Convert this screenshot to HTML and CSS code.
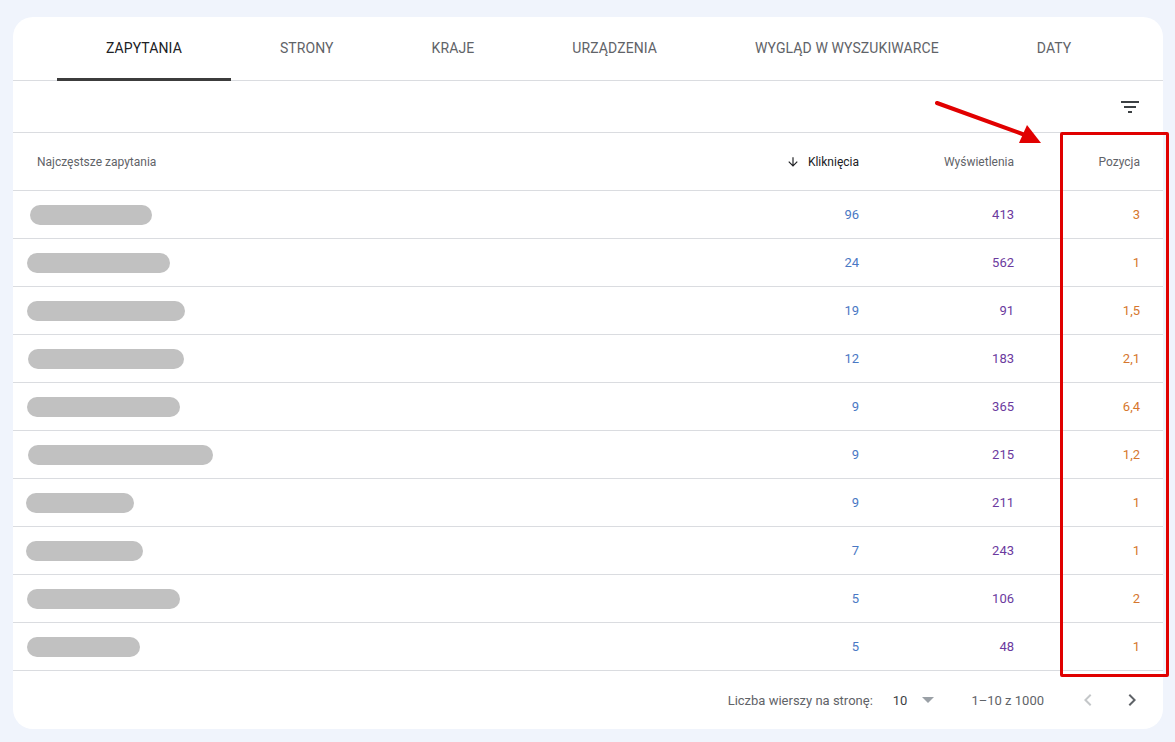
FILE: index.html
```html
<!DOCTYPE html>
<html lang="pl">
<head>
<meta charset="utf-8">
<title>Zapytania</title>
<link rel="stylesheet" href="styles.css">
</head>
<body>
<div class="card">
  <nav class="tabs">
    <div class="tab active">ZAPYTANIA</div>
    <div class="tab">STRONY</div>
    <div class="tab">KRAJE</div>
    <div class="tab">URZĄDZENIA</div>
    <div class="tab">WYGLĄD W WYSZUKIWARCE</div>
    <div class="tab">DATY</div>
  </nav>
  <div class="toolbar">
    <svg class="filter-icon" viewBox="0 0 24 24" width="24" height="24"><path d="M10 18h4v-2h-4v2zM3 6v2h18V6H3zm3 7h12v-2H6v2z" fill="#3c4043"/></svg>
  </div>
  <div class="row head">
    <div class="cell q-head">Najczęstsze zapytania</div>
    <div class="cell num sorted"><svg class="sort-icon" viewBox="0 0 24 24" width="14" height="14"><path d="M20 12l-1.41-1.41L13 16.17V4h-2v12.17l-5.58-5.59L4 12l8 8 8-8z" fill="#202124"/></svg><span>Kliknięcia</span></div>
    <div class="cell num">Wyświetlenia</div>
    <div class="cell num">Pozycja</div>
  </div>
  <div class="row"><div class="cell"><span class="blur" style="width:122px;margin-left:3px"></span></div><div class="cell num clicks">96</div><div class="cell num impr">413</div><div class="cell num pos">3</div></div>
  <div class="row"><div class="cell"><span class="blur" style="width:143px"></span></div><div class="cell num clicks">24</div><div class="cell num impr">562</div><div class="cell num pos">1</div></div>
  <div class="row"><div class="cell"><span class="blur" style="width:158px"></span></div><div class="cell num clicks">19</div><div class="cell num impr">91</div><div class="cell num pos">1,5</div></div>
  <div class="row"><div class="cell"><span class="blur" style="width:156px;margin-left:1px"></span></div><div class="cell num clicks">12</div><div class="cell num impr">183</div><div class="cell num pos">2,1</div></div>
  <div class="row"><div class="cell"><span class="blur" style="width:153px"></span></div><div class="cell num clicks">9</div><div class="cell num impr">365</div><div class="cell num pos">6,4</div></div>
  <div class="row"><div class="cell"><span class="blur" style="width:185px;margin-left:1px"></span></div><div class="cell num clicks">9</div><div class="cell num impr">215</div><div class="cell num pos">1,2</div></div>
  <div class="row"><div class="cell"><span class="blur" style="width:108px;margin-left:-1px"></span></div><div class="cell num clicks">9</div><div class="cell num impr">211</div><div class="cell num pos">1</div></div>
  <div class="row"><div class="cell"><span class="blur" style="width:117px;margin-left:-1px"></span></div><div class="cell num clicks">7</div><div class="cell num impr">243</div><div class="cell num pos">1</div></div>
  <div class="row"><div class="cell"><span class="blur" style="width:153px"></span></div><div class="cell num clicks">5</div><div class="cell num impr">106</div><div class="cell num pos">2</div></div>
  <div class="row"><div class="cell"><span class="blur" style="width:113px"></span></div><div class="cell num clicks">5</div><div class="cell num impr">48</div><div class="cell num pos">1</div></div>
  <div class="footer">
    <span class="f-label">Liczba wierszy na stronę:</span>
    <span class="f-select">10<svg class="caret" viewBox="0 0 10 5" width="12" height="6"><path d="M0 0l5 5 5-5z" fill="#9aa0a6"/></svg></span>
    <span class="f-range">1–10 z 1000</span>
    <svg class="chev" viewBox="0 0 24 24" width="24" height="24"><path d="M15.41 7.41L14 6l-6 6 6 6 1.41-1.41L10.83 12z" fill="#c4c7c9"/></svg>
    <svg class="chev next" viewBox="0 0 24 24" width="24" height="24"><path d="M10 6L8.59 7.41 13.17 12l-4.58 4.59L10 18l6-6z" fill="#5f6368"/></svg>
  </div>
  <div class="highlight"></div>
  <svg class="pointer" viewBox="0 0 140 60" width="140" height="60"><line x1="12" y1="16" x2="100" y2="48" stroke="#e10000" stroke-width="4" stroke-linecap="round"/><polygon points="116,56 94,56 102,38" fill="#e10000"/></svg>
</div>
</body>
</html>
```
FILE: styles.css
```css
* { box-sizing: border-box; }
html, body { margin: 0; padding: 0; }
body {
  background: #f0f4fc;
  font-family: Roboto, "Noto Sans", Arial, sans-serif;
  color: #5f6368;
  padding: 17px 12px 13px 13px;
}
.card {
  position: relative;
  background: #fff;
  border-radius: 20px;
  height: 712px;
}
.tabs {
  display: flex;
  height: 64px;
  padding-left: 44px;
  border-bottom: 1px solid #dadce0;
}
.tab {
  display: flex;
  align-items: center;
  justify-content: center;
  padding: 0 49px;
  font-size: 14px;
  font-weight: 400;
  letter-spacing: 0.1px;
  color: #5f6368;
  border-bottom: 3px solid transparent;
  margin-bottom: -1px;
}
.tab.active {
  color: #202124;
  border-bottom-color: #3c3c3c;
}
.toolbar {
  height: 52px;
  display: flex;
  align-items: center;
  justify-content: flex-end;
  padding-right: 21px;
  border-bottom: 1px solid #dadce0;
}
.row {
  display: grid;
  grid-template-columns: 1fr 150px 155px 126px;
  height: 48px;
  padding: 0 23px 0 14px;
  border-bottom: 1px solid #dadce0;
  font-size: 13px;
}
.row.head {
  height: 58px;
  font-size: 12px;
  color: #5f6368;
}
.cell {
  display: flex;
  align-items: center;
}
.q-head { padding-left: 10px; }
.num { justify-content: flex-end; }
.sorted { color: #202124; }
.sort-icon { margin-right: 8px; }
.blur {
  display: block;
  height: 20px;
  border-radius: 10px;
  background: #c1c1c1;
}
.clicks { color: #4a78c4; }
.impr { color: #6b3a9e; }
.pos { color: #d6772e; }
.footer {
  height: 58px;
  display: flex;
  align-items: center;
  justify-content: flex-end;
  padding-right: 19px;
  font-size: 13px;
  color: #5f6368;
}
.f-select {
  display: flex;
  align-items: center;
  margin-left: 20px;
  color: #3c4043;
  font-size: 13px;
}
.caret { margin-left: 15px; }
.f-range { margin-left: 37px; margin-right: 32px; }
.chev.next { margin-left: 20px; }
.highlight {
  position: absolute;
  left: 1047px;
  top: 115px;
  width: 109px;
  height: 545px;
  border: 3.5px solid #e00000;
  border-radius: 2px;
}
.pointer {
  position: absolute;
  left: 912px;
  top: 70px;
}
```
